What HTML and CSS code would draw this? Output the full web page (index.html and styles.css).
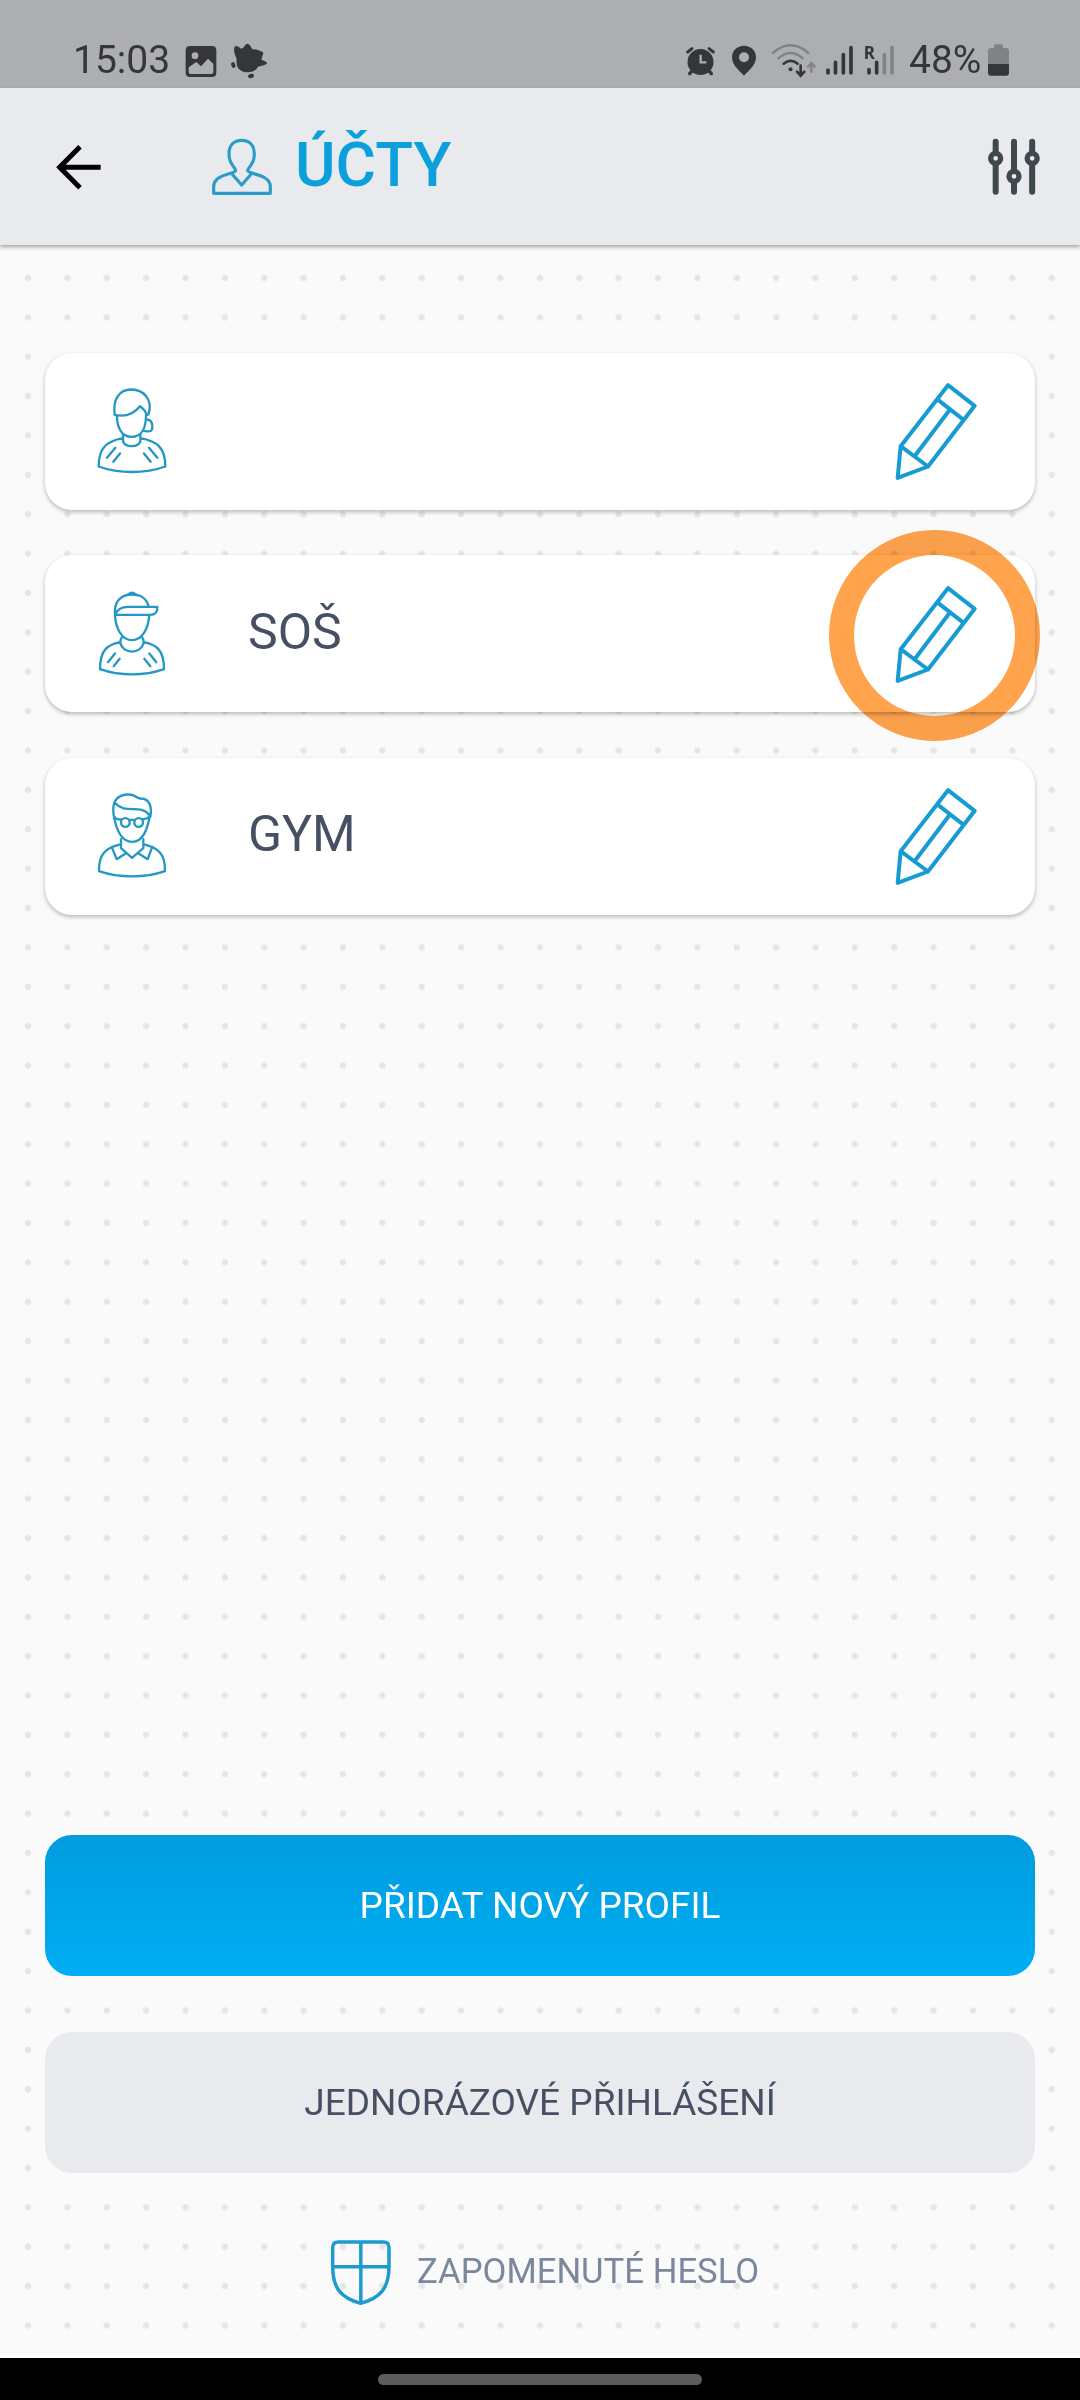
FILE: index.html
```html
<!DOCTYPE html>
<html lang="cs">
<head>
<meta charset="utf-8">
<title>Účty</title>
<link rel="stylesheet" href="styles.css">
</head>
<body>
<div class="screen">
  <div class="status">
    <span class="clock">15:03</span>
    <svg class="s-photo" width="32" height="40" viewBox="377 60 96 120"><path fill-rule="evenodd" d="M392 78h66q13 0 13 13v67q0 13-13 13h-66q-13 0-13-13V91q0-13 13-13zM388 142v14q0 6 6 6h62q6 0 6-6v-24l-16-16-21 23-14-13z" fill="#35363a"/><circle cx="407" cy="107" r="10" fill="#adaeb2"/></svg>
    <svg class="s-leaf" width="38" height="40" viewBox="509 60 114 120" fill="#35363a"><path d="M526 78q6-2 16 8l7-3q7-12 13-12 6 1 12 14 4 5 12 3l20 7q5 2 1 10l-4 14q14 5 17 9 2 4-10 8l-17 4q-7 16-29 17-20 0-29-11-8-10-6-24 0-8-6-20-5-20 3-24z"/><ellipse cx="519" cy="135" rx="6" ry="9" transform="rotate(-20 519 135)"/><ellipse cx="572" cy="168" rx="9" ry="6" transform="rotate(-15 572 168)"/></svg>
    <div class="status-right">
      <svg width="31" height="40" viewBox="45 60 93 120"><g stroke="#35363a" fill="none" stroke-linecap="round"><path d="M53 96l13-10M130 96l-13-10" stroke-width="9"/><path d="M64 155l-5 6M119 155l5 6" stroke-width="10"/></g><circle cx="91.500" cy="126" r="39" fill="#35363a"/><path d="M92 104v23h17" stroke="#adaeb2" stroke-width="7" fill="none"/></svg>
      <svg class="g15" width="26" height="40" viewBox="183 60 78 120"><path fill-rule="evenodd" d="M222 77c21 0 36 15 36 35 0 23-20 38-36 55-16-17-36-32-36-55 0-20 15-35 36-35zm0 20a15 15 0 1 0 0 30 15 15 0 0 0 0-30z" fill="#35363a"/></svg>
      <svg class="g14" width="46" height="40" viewBox="303 60 138 120" fill="none" stroke-linecap="round" stroke-width="8"><path d="M309 99q53-46 106 0M325 115q37-32 73 0M424 156v-24m-10 8l10-11 10 11" stroke="#818286" stroke-width="7"/><path d="M341 131q21-17 42 0" stroke="#35363a"/><path d="M392 137v29m-11-11l11 12 11-12" stroke="#35363a"/><circle cx="361.500" cy="148" r="6" fill="#35363a"/></svg>
      <svg class="g8" width="29" height="40" viewBox="465 60 87 120" fill="none" stroke="#35363a" stroke-linecap="round" stroke-width="11"><path d="M474 150v9M496.500 127v32M520 104v55M543 83v76"/></svg>
      <svg class="g9" width="32" height="40" viewBox="579 60 96 120" fill="none" stroke-linecap="round" stroke-width="11"><path d="M597 149v10M620 127v32" stroke="#35363a"/><path d="M643 104v55M666 83v76" stroke="#818286"/><text x="581" y="116" class="roam">R</text></svg>
      <span class="percent">48%</span>
      <svg width="23" height="40" viewBox="951 60 69 120"><path d="M972 84v-6q0-5 5-5h17q5 0 5 5v6h8q10 0 10 10v38h-63V94q0-10 10-10z" fill="#818286"/><path d="M954 132h63v26q0 9-9 9h-45q-9 0-9-9z" fill="#35363a"/></svg>
    </div>
  </div>

  <header class="header">
    <svg class="back" width="46" height="46" viewBox="169 192 138 138" fill="none" stroke="#000" stroke-width="15"><path d="M241 200l-61 61.500 61 61.500M180 261.500h123"/></svg>
    <svg class="title-icon" width="62" height="60" viewBox="634 172 186 180" fill="none" stroke="#2b9cc7" stroke-width="9.500" stroke-linejoin="round"><path d="M642 341v-20c0-30 40-36 54-41 14-5 14-6 9-14-12-16-17-25-17-43 0-27 15-41 38-41s38 14 38 41c0 18-5 27-17 43-5 8-5 9 9 14 14 5 56 11 56 41v20z"/><path d="M697 283l29 33 29-33"/></svg>
    <h1 class="title">ÚČTY</h1>
    <svg class="filters" width="54" height="58" viewBox="79 83 162 174" fill="none" stroke="#3e484d"><path d="M105 94v150M160 94v150M214.500 94v150" stroke-width="18" stroke-linecap="round"/><g fill="#e8eaee" stroke-width="16"><circle cx="105" cy="144" r="15"/><circle cx="160" cy="198" r="15"/><circle cx="214.500" cy="144" r="15"/></g></svg>
  </header>

  <main class="content">
    <div class="profiles">
      <div class="card">
        <svg width="90" height="90" viewBox="270 469.500 270 270" class="line"><path d="M344 556c-6-46 13-76 50-76 38 0 66 32 51 75l-6 1c-1-10-6-17-19-26-20 25-45 33-76 26z"/><path d="M351 559c0 36 14 63 44 63s43-27 43-64M441 570c13 1 16 9 16 21 0 15-5 17-26 13M369 615v17c0 24 52 24 52 0v-17M369 626c-50 9-73 30-73 85 60 22 140 22 200 0 0-55-23-76-75-85M346 655l-25 30M360 672l-20 25M447 655l25 30M432 672l20 25"/></svg>
        <span class="name"></span>
        <span class="edit"><svg width="110" height="110" viewBox="60 109.500 330 330" class="pencil"><path d="M264 140l80 62-140 182-91 34 9-95zM234 184l74 58M267 217l-101 133M122 323l82 61"/></svg></span>
      </div>
      <div class="card">
        <svg width="90" height="90" viewBox="30 85.500 270 270" class="line"><path d="M105 160c-3-35 16-58 51-58 30 0 46 16 50 37M105 163c7-18 20-24 39-24h88c1 15-6 24-22 24zM105 166c3 38 20 73 51 73s48-34 52-73M125 231c-3 5-5 10-4 16 8 35 62 35 70 0 1-6-1-11-4-16M121 245c-44 8-61 29-61 81 60 21 133 21 192 0 0-52-17-73-61-81M105 279l-21 26M119 295l-18 22M208 279l21 26M193 295l18 22"/><path d="M146 101q10-9 20 0z" fill="#2498c4"/></svg>
        <span class="name">SOŠ</span>
        <span class="edit"><svg width="110" height="110" viewBox="60 109.500 330 330" class="pencil"><path d="M264 140l80 62-140 182-91 34 9-95zM234 184l74 58M267 217l-101 133M122 323l82 61"/></svg><i class="ring"></i></span>
      </div>
      <div class="card">
        <svg width="90" height="90" viewBox="30 94.500 270 270" class="line"><path d="M101 168c-6-42 9-63 45-63 18 0 20 7 33 12 32-2 37 28 32 55M107 132c28 33 79 0 102 36M101 167c7 40 20 80 55 80s46-40 54-78M103 172c5 8 10 8 19 8M189 179c8-1 14-1 20-8M149 183q6-5 13 0"/><circle cx="136" cy="189" r="13"/><circle cx="176" cy="189" r="13"/><path d="M123 239v27l33 29 34-29v-27M123 254c-49 12-67 31-66 81 60 21 138 21 198 0 1-50-17-69-65-81M95 262l15 37 28-18M217 262l-14 37-28-18"/></svg>
        <span class="name">GYM</span>
        <span class="edit"><svg width="110" height="110" viewBox="60 109.500 330 330" class="pencil"><path d="M264 140l80 62-140 182-91 34 9-95zM234 184l74 58M267 217l-101 133M122 323l82 61"/></svg></span>
      </div>
    </div>
    <div class="actions">
      <div class="button primary">PŘIDAT NOVÝ PROFIL</div>
      <div class="button secondary">JEDNORÁZOVÉ PŘIHLÁŠENÍ</div>
      <div class="forgot">
        <svg width="62" height="68" viewBox="90 148 186 204" fill="none" stroke="#1d9bd1" stroke-width="10.500" stroke-linejoin="round"><path d="M98 174q0-17 17-17h135q17 0 17 17v56c0 68-28 96-85 111-57-15-84-43-84-111zM182.500 157v184M98 231h169"/></svg>
        <span class="forgot-text">ZAPOMENUTÉ HESLO</span>
      </div>
    </div>
  </main>
  <div class="nav"><div class="handle"></div></div>
</div>
</body>
</html>
```
FILE: styles.css
```css
* { box-sizing: border-box; }
body { margin: 0; font-family: Roboto, sans-serif; }
svg { display: block; flex: none; overflow: visible; }
.screen { width: 1080px; height: 2400px; display: flex; flex-direction: column; overflow: hidden; background: #fafafa; }

.status { height: 88px; flex: none; padding: 40px 70px 0 73px; display: flex; background: #adaeb2; color: #35363a; line-height: 41px; white-space: nowrap; }
.clock { width: 112px; font-size: 39px; }
.s-leaf { margin-left: 13px; }
.status-right { margin-left: auto; display: flex; }
.g15 { margin-left: 15px; }
.g14 { margin-left: 14px; }
.g8 { margin-left: 8px; }
.g9 { margin-left: 9px; }
.roam { font: 700 51px "Noto Sans", sans-serif; fill: #35363a; stroke: none; }
.percent { width: 78px; margin-left: 14px; font-size: 39px; }

.header { position: relative; z-index: 1; height: 157px; flex: none; padding: 0 39px 0 56px; display: flex; align-items: flex-start; background: #e8eaee; box-shadow: 0 2px 4px rgba(0,0,0,.35); }
.back { margin-top: 56px; }
.title-icon { margin: 49px 0 0 109px; }
.title { margin: 39px 0 0 22px; font-size: 62px; line-height: 76px; font-weight: 500; color: #0ba0db; }
.filters { margin: 50px 0 0 auto; }

.content { height: 2109px; flex: none; padding: 107.500px 45px 0; display: flex; flex-direction: column; justify-content: space-between;
  background: radial-gradient(circle at center, #e5e5e5 2.5px, rgba(229,229,229,0) 3.8px) 8.3px 13.3px / 39.375px 39.375px #fafafa; }
.profiles { display: grid; gap: 45.500px; }
.card { height: 157px; padding: 0 45px; display: flex; align-items: center; border-radius: 27px; background: #fff; box-shadow: 0 2px 4px rgba(0,0,0,.27); }
.line { fill: none; stroke: #2498c4; stroke-width: 7; stroke-linecap: round; stroke-linejoin: round; }
.pencil { fill: none; stroke: #179bd3; stroke-width: 12; stroke-linecap: round; stroke-linejoin: round; }
.name { margin: 0 0 4px 68px; font-size: 50px; line-height: 60px; color: #475063; }
.edit { position: relative; margin: 0 0 2px auto; }
.ring { position: absolute; z-index: 2; left: -51px; top: -48px; width: 211px; height: 211px; border: 25px solid #ffa34d; border-radius: 50%; mix-blend-mode: multiply; }

.actions { height: 519px; display: flex; flex-direction: column; }
.button { height: 141px; flex: none; display: flex; align-items: center; justify-content: center; border-radius: 27px; font-size: 37px; }
.primary { background: linear-gradient(#009cde, #00aef3); color: #fff; }
.secondary { margin-top: 56px; background: #e8eaee; color: #475063; }
.forgot { margin: 66px 0 0 285px; display: flex; align-items: center; gap: 25px; font-size: 34.700px; color: #7b879d; }
.forgot-text { margin-bottom: 4px; }

.nav { flex: 1; margin-top: 4px; padding-top: 16px; background: #000; box-shadow: 0 -4px #fff; }
.handle { width: 324px; height: 11px; margin: 0 auto; border-radius: 6px; background: #5d5d5d; }
```
